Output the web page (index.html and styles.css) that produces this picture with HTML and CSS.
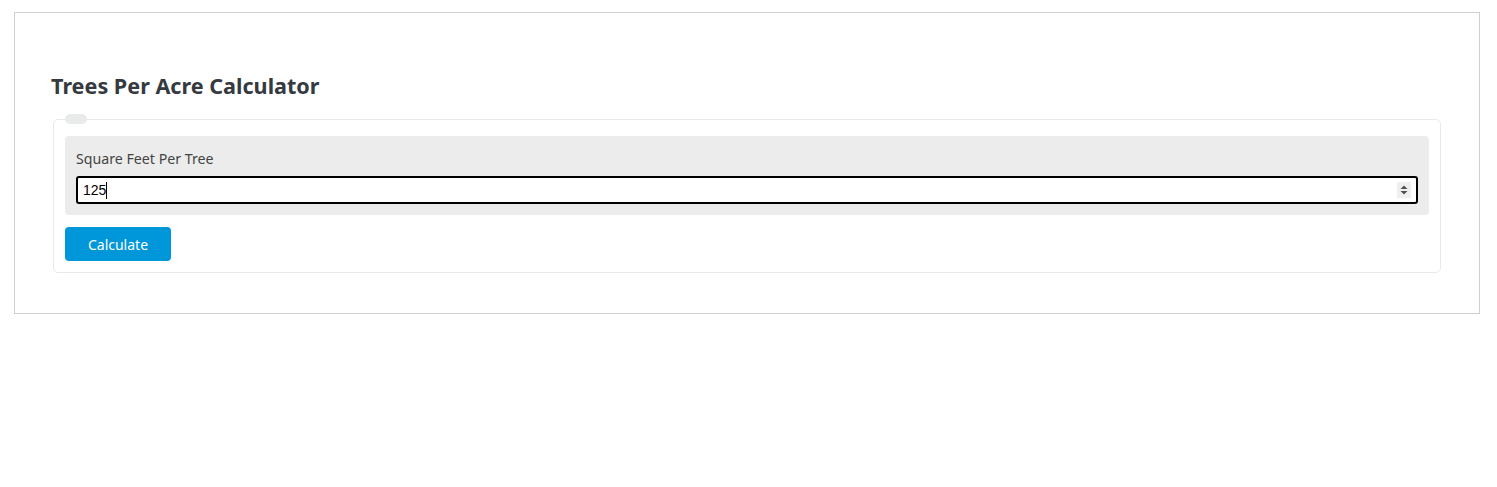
FILE: index.html
```html
<!DOCTYPE html>
<html lang="en">
<head>
<meta charset="utf-8">
<title>Trees Per Acre Calculator</title>
<link rel="stylesheet" href="styles.css">
</head>
<body>
<div class="card">
  <h2 class="title">Trees Per Acre Calculator</h2>
  <fieldset class="calc">
    <legend class="calc-legend"></legend>
    <div class="panel">
      <label class="field-label">Square Feet Per Tree</label>
      <div class="field">
        <span class="field-value">125</span><span class="caret"></span>
        <span class="spinner">
          <svg width="14" height="16" viewBox="0 0 14 16"><rect width="14" height="16" fill="#efefef"/><path d="M3.5 7 L7 3.5 L10.5 7 Z" fill="#505050"/><path d="M3.5 9 L7 12.5 L10.5 9 Z" fill="#505050"/></svg>
        </span>
      </div>
    </div>
    <button class="btn" type="button">Calculate</button>
  </fieldset>
</div>
</body>
</html>
```

FILE: styles.css
```css
html, body {
  margin: 0;
  padding: 0;
  background: #fff;
}
body {
  padding: 12px 17px 0 14px;
  font-family: "Noto Sans", "Open Sans", sans-serif;
}
.card {
  border: 1px solid #cfcfd3;
  padding: 58px 36px 40px 36px;
}
.title {
  margin: 0 0 13px 0;
  font-size: 21.6px;
  line-height: 30px;
  font-weight: 700;
  color: #353a40;
}
.calc {
  margin: 0 2px;
  border: 1px solid #e8e9ea;
  border-radius: 5px;
  padding: 12px 11px 11px 11px;
}
.calc-legend {
  width: 22px;
  height: 10px;
  padding: 0;
  background: #e9eaea;
  border-radius: 6px;
}
.panel {
  background: #ebeceb;
  border-radius: 4px;
  padding: 13px 11px 11px 11px;
}
.field-label {
  display: block;
  font-size: 14.2px;
  line-height: 20px;
  color: #444;
  margin-bottom: 7px;
}
.field {
  position: relative;
  display: flex;
  align-items: center;
  height: 28px;
  box-sizing: border-box;
  border: 2px solid #000;
  border-radius: 3px;
  background: #fff;
  padding: 0 5px;
  font-family: "Liberation Sans", Arial, sans-serif;
  font-size: 14px;
  color: #000;
}
.caret {
  display: inline-block;
  width: 1px;
  height: 17px;
  background: #000;
}
.spinner {
  position: absolute;
  right: 5px;
  top: 4px;
  display: block;
  height: 16px;
}
.spinner svg { display: block; }
.btn {
  margin-top: 12px;
  width: 106px;
  height: 34px;
  border: 0;
  border-radius: 4px;
  background: #0096da;
  color: #fff;
  font-family: "Noto Sans", "Open Sans", sans-serif;
  font-size: 14px;
  padding: 0;
}
```
